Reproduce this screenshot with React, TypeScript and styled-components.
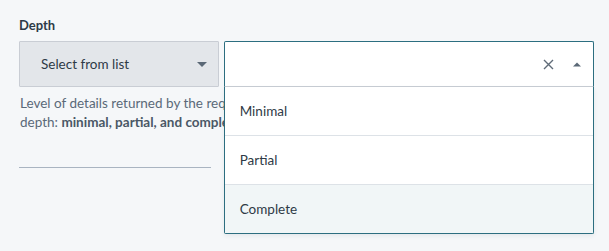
import React from 'react'
import styled, { createGlobalStyle } from 'styled-components'

const GlobalStyle = createGlobalStyle`
  html, body {
    margin: 0;
    background: #f5f7f9;
  }
  body {
    font-family: Lato, 'Noto Sans', sans-serif;
    color: #2e3b48;
  }
`

const options = ['Minimal', 'Partial', 'Complete']

export default function App() {
  return (
    <>
      <GlobalStyle />
      <Page>
        <Label>Depth</Label>
        <Row>
          <Select>
            <span>Select from list</span>
            <Caret />
          </Select>
          <Combo>
            <ComboInput>
              <Clear aria-label="clear">
                <svg width="11" height="11" viewBox="0 0 11 11">
                  <path d="M1 1 L10 10 M10 1 L1 10" stroke="#5f6b78" strokeWidth="1.4" fill="none" />
                </svg>
              </Clear>
              <Caret $up />
            </ComboInput>
            <Menu>
              {options.map((o, i) => (
                <Option key={o} $active={i === options.length - 1}>
                  {o}
                </Option>
              ))}
            </Menu>
          </Combo>
        </Row>
        <Help>
          <Line>Level of details returned by the request. Choose one of three levels of</Line>
          <Line>
            depth: <b>minimal, partial, and complete.</b>
          </Line>
        </Help>
        <Underline />
      </Page>
    </>
  )
}

const Page = styled.div`
  box-sizing: border-box;
  min-height: 251px;
  padding: 17px 15px 0 19px;
  display: flex;
  flex-direction: column;
`
const Label = styled.div`
  font-size: 13px;
  font-weight: 700;
  color: #2d3a47;
  margin-bottom: 8px;
`
const Row = styled.div`
  display: flex;
  gap: 5px;
  align-items: flex-start;
  position: relative;
  z-index: 1;
`
const Select = styled.div`
  box-sizing: border-box;
  width: 200px;
  height: 46px;
  background: #e3e6ea;
  border: 1px solid #c9cdd4;
  border-radius: 1px;
  display: flex;
  align-items: center;
  justify-content: space-between;
  padding: 0 11px 0 21px;
  font-size: 13.5px;
  color: #2e3a46;
`
const Caret = styled.span<{ $up?: boolean }>`
  width: 0;
  height: 0;
  border-left: 5px solid transparent;
  border-right: 5px solid transparent;
  ${p => (p.$up ? 'border-bottom: 5px solid #5b6876;' : 'border-top: 5px solid #5b6876;')}
  ${p => (p.$up ? 'transform: scale(0.8);' : '')}
`
const Combo = styled.div`
  position: relative;
  width: 371px;
`
const ComboInput = styled.div`
  box-sizing: border-box;
  height: 46px;
  background: #fff;
  border: 1px solid #2c6e80;
  border-bottom: 1px solid #c8cdd4;
  border-radius: 2px 2px 0 0;
  display: flex;
  align-items: center;
  justify-content: flex-end;
  gap: 18px;
  padding: 0 11px 0 0;
`
const Clear = styled.span`
  display: flex;
  align-items: center;
`
const Menu = styled.div`
  position: absolute;
  top: 100%;
  left: 0;
  right: 0;
  background: #fff;
  border: 1px solid #2c6e80;
  border-top: none;
  border-radius: 0 0 2px 2px;
  box-shadow: 0 2px 4px rgba(40, 60, 80, 0.08);
`
const Option = styled.div<{ $active?: boolean }>`
  height: 48px;
  display: flex;
  align-items: center;
  padding-left: 15px;
  font-size: 13.5px;
  color: #2e3a46;
  background: ${p => (p.$active ? '#f1f6f7' : '#fff')};
  & + & {
    border-top: 1px solid #dde2e7;
  }
`
const Help = styled.div`
  margin: 7px 0 0 1px;
  width: 204px;
  overflow: hidden;
  font-size: 13.5px;
  line-height: 19px;
  color: #5a6978;
  b {
    color: #4a5866;
  }
`
const Line = styled.div`
  white-space: nowrap;
`
const Underline = styled.div`
  width: 192px;
  height: 1px;
  background: #a9b4c1;
  margin-top: 35px;
`
